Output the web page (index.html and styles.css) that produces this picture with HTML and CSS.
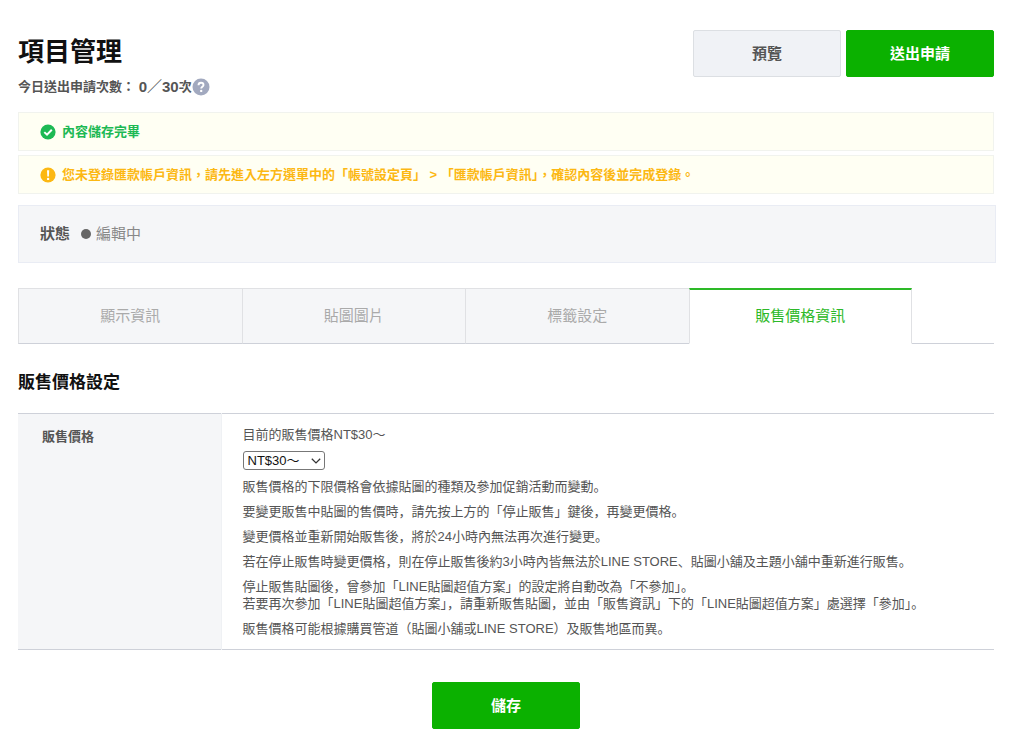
FILE: index.html
```html
<!DOCTYPE html>
<html lang="zh-Hant">
<head>
    <meta charset="UTF-8">
    <meta name="viewport" content="width=device-width, initial-scale=1.0">
    <title>項目管理</title>
    <link rel="stylesheet" href="styles.css">
</head>
<body>
    <main class="page">
        <header class="page-header">
            <div>
                <h1>項目管理</h1>
                <p class="quota">今日送出申請次數： <span class="count">0／30</span>次<button type="button" class="help" aria-label="說明"><svg width="18" height="18" viewBox="0 0 18 18"><circle cx="9" cy="9" r="8.5" fill="#a2a9bf"/><path d="M6.5 7.2C6.5 5.6 7.5 4.7 9 4.7s2.5.9 2.5 2.2c0 1.9-2.3 1.9-2.3 3.7" fill="none" stroke="#fff" stroke-width="1.9"/><circle cx="9.2" cy="12.9" r="1.2" fill="#fff"/></svg></button></p>
            </div>
            <div class="actions">
                <button type="button" class="btn btn-gray">預覽</button>
                <button type="button" class="btn btn-green">送出申請</button>
            </div>
        </header>

        <div class="messages">
            <p class="message success">
                <svg width="16" height="16" viewBox="0 0 16 16"><circle cx="8" cy="8" r="7.6" fill="#1db954"/><path d="M4.3 8.1l2.7 2.6 4.8-4.9" fill="none" stroke="#fff" stroke-width="2"/></svg>
                內容儲存完畢
            </p>
            <p class="message warning">
                <svg width="16" height="16" viewBox="0 0 16 16"><circle cx="8" cy="8" r="7.6" fill="#fcb813"/><path d="M7 3.2h2.2L8.9 9.4H7.3z" fill="#fff"/><circle cx="8.1" cy="11.9" r="1.2" fill="#fff"/></svg>
                您未登錄匯款帳戶資訊，請先進入左方選單中的「帳號設定頁」 &gt; 「匯款帳戶資訊」，確認內容後並完成登錄。
            </p>
        </div>

        <div class="status">
            <strong>狀態</strong>
            <span class="dot"></span>
            <span>編輯中</span>
        </div>

        <nav class="tabs">
            <a href="#info">顯示資訊</a>
            <a href="#images">貼圖圖片</a>
            <a href="#tags">標籤設定</a>
            <a href="#price" class="active" aria-current="page">販售價格資訊</a>
        </nav>

        <form>
            <h2>販售價格設定</h2>
            <table class="settings">
                <tr>
                    <th scope="row"><label for="price">販售價格</label></th>
                    <td lang="ja">
                        <p>目前的販售價格NT$30～</p>
                        <div class="select">
                            <select id="price" name="price">
                                <option>NT$30～</option>
                            </select>
                            <svg width="10" height="6" viewBox="0 0 10 6"><path d="M.8.8L5 4.9 9.2.8" fill="none" stroke="#333" stroke-width="1.3"/></svg>
                        </div>
                        <p>販售價格的下限價格會依據貼圖的種類及參加促銷活動而變動。</p>
                        <p>要變更販售中貼圖的售價時，請先按上方的「停止販售」鍵後，再變更價格。</p>
                        <p>變更價格並重新開始販售後，將於24小時內無法再次進行變更。</p>
                        <p>若在停止販售時變更價格，則在停止販售後約3小時內皆無法於LINE STORE、貼圖小舖及主題小舖中重新進行販售。</p>
                        <p>停止販售貼圖後，曾參加「LINE貼圖超值方案」的設定將自動改為「不參加」。<br>若要再次參加「LINE貼圖超值方案」，請重新販售貼圖，並由「販售資訊」下的「LINE貼圖超值方案」處選擇「參加」。</p>
                        <p>販售價格可能根據購買管道（貼圖小舖或LINE STORE）及販售地區而異。</p>
                    </td>
                </tr>
            </table>
            <div class="submit">
                <button type="button" class="btn btn-green">儲存</button>
            </div>
        </form>
    </main>
</body>
</html>
```
FILE: styles.css
```css
* {
    box-sizing: border-box;
}
body {
    margin: 0;
    background: #fff;
    color: #555;
    font-family: "Liberation Sans", "Noto Sans CJK TC", sans-serif;
    font-size: 13px;
    line-height: 17px;
}
h1, h2, p {
    margin: 0;
}
button, select {
    font-family: inherit;
}
.page {
    padding: 30px 30px 20px 18px;
}

/* header */
.page-header {
    display: flex;
    justify-content: space-between;
    align-items: flex-start;
}
h1 {
    color: #111;
    font-size: 26px;
    line-height: 44px;
}
.quota {
    display: flex;
    align-items: center;
    margin-top: 3px;
    font-weight: bold;
    line-height: 20px;
    white-space: pre;
}
.count {
    font-size: 15px;
}
.help {
    display: flex;
    padding: 0;
    border: 0;
    background: none;
    cursor: pointer;
}
.actions {
    display: flex;
    gap: 5px;
}
.btn {
    width: 148px;
    height: 47px;
    padding: 0 0 2px;
    border: 1px solid #0bb100;
    border-radius: 2px;
    font-size: 15px;
    font-weight: bold;
    cursor: pointer;
}
.btn-gray {
    border-color: #dcdfe3;
    background: #f0f2f6;
    color: #555;
}
.btn-green {
    background: #0bb100;
    color: #fff;
}

/* messages */
.messages {
    display: grid;
    gap: 4px;
    margin-top: 15px;
}
.message {
    display: flex;
    align-items: center;
    gap: 6px;
    padding: 10px 21px;
    border: 1px solid #f1f3ee;
    background: #fffff3;
    font-weight: bold;
    line-height: 17px;
}
.success {
    color: #1db954;
}
.warning {
    color: #fcb813;
}

.status {
    display: flex;
    align-items: center;
    margin: 11px -2px 0 0;
    padding: 16px 21px;
    border: 1px solid #e9ecf4;
    background: #f5f6f8;
    color: #888;
    font-size: 15px;
    line-height: 24px;
}
.status strong {
    color: #555;
}
.dot {
    width: 10px;
    height: 10px;
    margin: 0 5px 0 11px;
    border-radius: 50%;
    background: #666;
}

/* tabs */
.tabs {
    display: flex;
    margin-top: 25px;
    box-shadow: inset 0 -1px #ced1d9;
}
.tabs a {
    flex: 0 0 22.9%;
    padding: 15px 0;
    border: 1px solid #e0e1e4;
    border-right: 0;
    border-bottom-color: #ced1d9;
    background: #f5f6f8;
    color: #aaa;
    font-size: 15px;
    line-height: 24px;
    text-align: center;
    text-decoration: none;
}
.tabs .active {
    padding-top: 14px;
    border-top: 2px solid #2db928;
    border-right: 1px solid #e0e1e4;
    border-bottom-color: #fff;
    background: #fff;
    color: #2db928;
}

/* price settings */
h2 {
    margin-top: 27px;
    color: #111;
    font-size: 17px;
    line-height: 24px;
}
.settings {
    width: 100%;
    margin-top: 18px;
    border-top: 1px solid #ced1d9;
    border-bottom: 1px solid #ced1d9;
    border-collapse: collapse;
}
.settings th {
    width: 203px;
    padding: 14px 24px;
    border-right: 1px solid #eff1f4;
    background: #f5f6f8;
    text-align: left;
    vertical-align: top;
}
.settings td {
    padding: 12px 0 12px 21px;
    font-family: "Liberation Sans", "Noto Sans CJK JP", sans-serif;
}
.settings p + p,
.select + p {
    margin-top: 8px;
}
.select {
    display: grid;
    align-items: center;
    width: 82px;
    margin-top: 8px;
}
.select select,
.select svg {
    grid-area: 1 / 1;
}
.select select {
    width: 100%;
    height: 19px;
    padding: 0 4px;
    border: 1px solid #777;
    border-radius: 3px;
    appearance: none;
    background: #fff;
    color: #111;
    font-size: 13px;
}
.select svg {
    justify-self: end;
    margin-right: 4px;
    pointer-events: none;
}
.submit {
    margin-top: 32px;
    text-align: center;
}
```
